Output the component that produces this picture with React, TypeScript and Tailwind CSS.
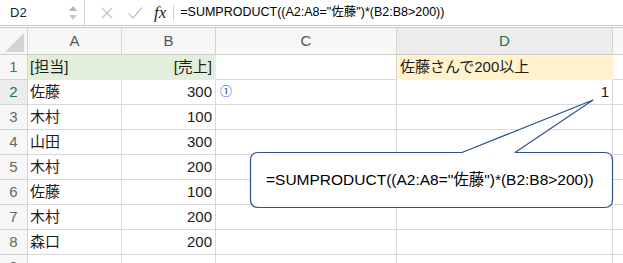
import React from 'react';

/**
 * Excel風シート: SUMPRODUCT の説明
 */

type Row = {
  n: number;
  a: string;
  b: string;
  c?: React.ReactNode;
  d?: string;
};

const rows: Row[] = [
  { n: 2, a: '佐藤', b: '300', c: '①', d: '1' },
  { n: 3, a: '木村', b: '100' },
  { n: 4, a: '山田', b: '300' },
  { n: 5, a: '木村', b: '200' },
  { n: 6, a: '佐藤', b: '100' },
  { n: 7, a: '木村', b: '200' },
  { n: 8, a: '森口', b: '200' },
];

const FORMULA = '=SUMPRODUCT((A2:A8="佐藤")*(B2:B8>200))';

const cellFont = { fontFamily: '"Liberation Sans", "Noto Sans CJK JP", sans-serif' };

function FormulaBar() {
  return (
    <div className="flex h-[28px] items-center border-b-[3px] border-double border-[#c9c9c9] bg-white text-[13px] text-[#222]">
      <div className="w-[64px] pl-[10px]">D2</div>
      {/* 名前ボックスのスピナー */}
      <svg width="10" height="16" viewBox="0 0 10 16" className="ml-[4px]">
        <path d="M1 6 L5 1 L9 6 Z" fill="#b5b5b5" />
        <path d="M1 10 L5 15 L9 10 Z" fill="#c9c9c9" />
      </svg>
      <div className="ml-[6px] h-[26px] w-px bg-[#d0d0d0]" />
      <svg width="14" height="14" viewBox="0 0 14 14" className="ml-[15px]">
        <path d="M2 2 L12 12 M12 2 L2 12" stroke="#c4c4c4" strokeWidth="1.4" />
      </svg>
      <svg width="16" height="14" viewBox="0 0 16 14" className="ml-[13px]">
        <path d="M1.5 7.5 L6 12 L15 1.5" stroke="#c4c4c4" strokeWidth="1.4" fill="none" />
      </svg>
      <span
        className="ml-[11px] text-[17px] italic text-[#222]"
        style={{ fontFamily: '"Liberation Serif", serif' }}
      >
        fx
      </span>
      <div className="ml-[7px] h-[16px] w-px bg-[#d0d0d0]" />
      <div className="ml-[6px] text-[12.5px] text-black" style={cellFont}>
        {FORMULA}
      </div>
    </div>
  );
}

function HeaderRow() {
  const cols = [
    { l: 'A', w: 'w-[94px]' },
    { l: 'B', w: 'w-[94px]' },
    { l: 'C', w: 'w-[181px]' },
  ];
  return (
    <div className="flex h-[27px] border-b border-[#cfcfcf] bg-[#f7f7f7] text-[15px] text-[#555]">
      <div className="relative w-[28px] border-r border-[#d6d6d6]">
        <svg width="28" height="26" viewBox="0 0 28 26" className="absolute left-0 top-0">
          <path d="M5 24 L24 24 L24 5 Z" fill="#d3d3d3" />
        </svg>
      </div>
      {cols.map((c) => (
        <div
          key={c.l}
          className={`${c.w} flex items-center justify-center border-r border-[#d6d6d6]`}
        >
          {c.l}
        </div>
      ))}
      <div className="flex w-[216px] items-center justify-center border-r border-[#d6d6d6] bg-[#ececec] text-[#217346]">
        D
      </div>
      <div className="flex-1" />
    </div>
  );
}

export default function App() {
  return (
    <div
      className="relative h-[263px] w-[623px] overflow-hidden bg-white"
      style={{ fontFamily: '"Liberation Sans", "Noto Sans CJK JP", sans-serif' }}
    >
      <FormulaBar />
      <HeaderRow />

      {/* 1行目: 見出し */}
      <div className="flex h-[25px] text-[15px] text-[#1c1c1c]">
        <div className="flex w-[28px] items-center justify-center border-r border-b border-[#d6d6d6] bg-[#f7f7f7] text-[#666]">
          1
        </div>
        <div className="flex w-[188px] items-center justify-between border-r border-b border-[#e2efda] bg-[#e2efda] pl-[2px] pr-[3px]">
          <span>[担当]</span>
          <span>[売上]</span>
        </div>
        <div className="w-[181px] border-r border-b border-[#d9d9d9]" />
        <div className="flex w-[216px] items-center border-r border-b border-[#fff2cc] bg-[#fff2cc] pl-[3px]">
          佐藤さんで200以上
        </div>
        <div className="flex-1 border-b border-[#d9d9d9]" />
      </div>

      {rows.map((r) => (
        <div key={r.n} className="flex h-[25px] text-[15px] text-[#1c1c1c]">
          <div
            className={
              r.n === 2
                ? 'flex w-[28px] items-center justify-center border-r border-b border-[#d6d6d6] bg-[#ececec] text-[#217346]'
                : 'flex w-[28px] items-center justify-center border-r border-b border-[#d6d6d6] bg-[#f7f7f7] text-[#666]'
            }
          >
            {r.n}
          </div>
          <div className="flex w-[94px] items-center border-r border-b border-[#d9d9d9] pl-[2px]">
            {r.a}
          </div>
          <div className="flex w-[94px] items-center justify-end border-r border-b border-[#d9d9d9] pr-[3px]">
            {r.b}
          </div>
          <div className="flex w-[181px] items-center border-r border-b border-[#d9d9d9] pl-[4px] text-[12px] text-[#2a3de0]">
            {r.c}
          </div>
          <div className="flex w-[216px] items-center justify-end border-r border-b border-[#d9d9d9] pr-[3px]">
            {r.d}
          </div>
          <div className="flex-1 border-b border-[#d9d9d9]" />
        </div>
      ))}

      {/* 9行目 (見切れ) */}
      <div className="flex h-[25px] text-[15px]">
        <div className="flex w-[28px] items-center justify-center border-r border-[#d6d6d6] bg-[#f7f7f7] text-[#666]">
          9
        </div>
        <div className="w-[94px] border-r border-[#d9d9d9]" />
        <div className="w-[94px] border-r border-[#d9d9d9]" />
        <div className="w-[181px] border-r border-[#d9d9d9]" />
        <div className="w-[216px] border-r border-[#d9d9d9]" />
      </div>

      {/* 吹き出し */}
      <svg
        width="623"
        height="263"
        viewBox="0 0 623 263"
        className="pointer-events-none absolute left-0 top-0"
      >
        <path
          d="M258.5 152.5 L462 152.5 L593 100 L515 152.5 L604.5 152.5 Q612.5 152.5 612.5 160.5 L612.5 199.5 Q612.5 207.5 604.5 207.5 L258.5 207.5 Q250.5 207.5 250.5 199.5 L250.5 160.5 Q250.5 152.5 258.5 152.5 Z"
          fill="white"
          stroke="#2f528f"
          strokeWidth="1.2"
          strokeLinejoin="round"
        />
      </svg>
      <div className="absolute left-[266px] top-[170px] text-[15.5px] leading-[20px] text-black">
        {FORMULA}
      </div>
    </div>
  );
}
